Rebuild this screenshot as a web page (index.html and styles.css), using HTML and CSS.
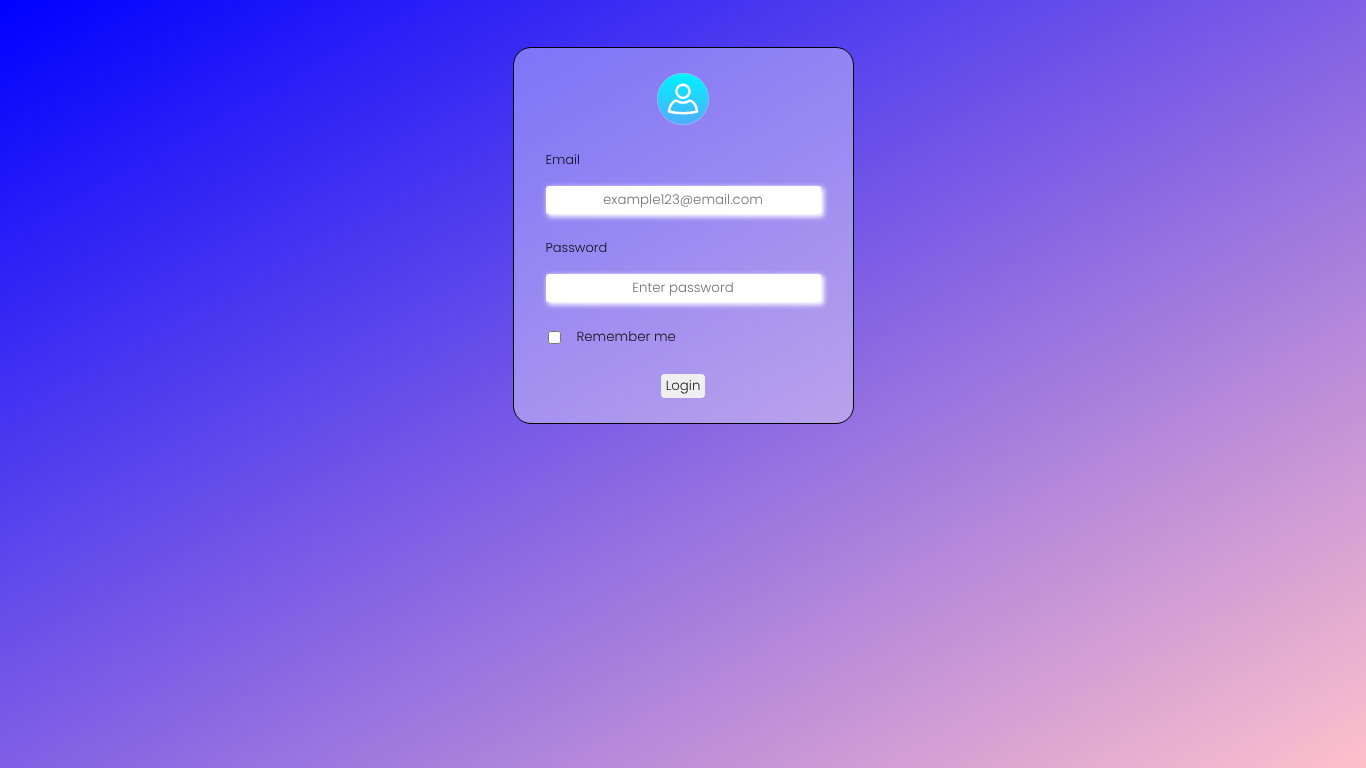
FILE: index.html
```html
<!DOCTYPE html>
<html lang="en">
<head>
<meta charset="utf-8">
<title>Login</title>
<link rel="stylesheet" href="styles.css">
</head>
<body>
<form class="card">
  <svg class="avatar" viewBox="0 0 52 52" aria-hidden="true">
    <defs><linearGradient id="sky" x1="0" y1="0" x2="0" y2="1"><stop offset="0" stop-color="#00f2fe"/><stop offset="1" stop-color="#4facfe"/></linearGradient></defs>
    <circle cx="26" cy="26" r="25.7" fill="url(#sky)" stroke="#fff" stroke-opacity=".45" stroke-width=".6"/>
    <g fill="none" stroke="#fff" stroke-width="2.4" stroke-linejoin="round" stroke-linecap="round">
      <circle cx="26" cy="18.3" r="6.6"/>
      <path d="M19.3 27.4C15 28.500 12.200 33.500 11.900 38.500Q18 40.200 26 40.200T40.100 38.500C39.800 33.500 37 28.500 32.700 27.400Q26 32 19.300 27.400Z"/>
    </g>
  </svg>
  <label class="label" for="email">Email</label>
  <input class="field" id="email" type="email" placeholder="example123@email.com">
  <label class="label label-password" for="password">Password</label>
  <input class="field" id="password" type="password" placeholder="Enter password">
  <div class="remember"><input class="check" id="remember" type="checkbox"><label class="remember-text" for="remember">Remember me</label></div>
  <button class="login" type="button">Login</button>
</form>
</body>
</html>
```
FILE: styles.css
```css
* { box-sizing: border-box; }
html { height: 100%; }
body {
  margin: 0;
  height: 100vh;
  overflow: hidden;
  display: flex;
  justify-content: center;
  align-items: flex-start;
  background: linear-gradient(to bottom right, blue, pink);
  font-family: Poppins, Lato, sans-serif;
  font-weight: 300;
  font-size: 13.333px;
  color: rgba(0, 0, 0, .88);
}
.card {
  width: 341px;
  height: 377px;
  margin: 47px 0 0 1px;
  padding: 25px 32px 0 31px;
  display: flex;
  flex-direction: column;
  border: 1px solid #000;
  border-radius: 18px;
  background: rgba(255, 255, 255, .35);
  will-change: transform;
  text-rendering: geometricPrecision;
}
.avatar { width: 52px; height: 52px; align-self: center; }
.label {
  height: 20px;
  line-height: 20px;
  margin-top: 25px;
  padding-left: .5px;
  font-size: 13px;
}
.field {
  width: 275px;
  height: 28px;
  margin: 16px 0 0 1px;
  padding: 0 3px 0 2px;
  border: 0;
  border-radius: 3px;
  background: #fff;
  box-shadow: 2px 2px 5px 1px #fff;
  font: inherit;
  text-align: center;
  text-rendering: inherit;
}
.field::placeholder { color: #757575; }
.label-password { margin-top: 24px; }
.remember { display: flex; align-items: center; height: 20px; margin-top: 25px; }
.check { width: 13px; height: 13px; margin: 0 15.5px 0 3px; }
.login {
  width: 44px;
  height: 24px;
  margin-top: 27px;
  padding: 0;
  align-self: center;
  border: 0;
  border-radius: 4px;
  background: #efefef;
  color: rgba(0, 0, 0, .88);
  font: inherit;
  text-rendering: inherit;
}
```
